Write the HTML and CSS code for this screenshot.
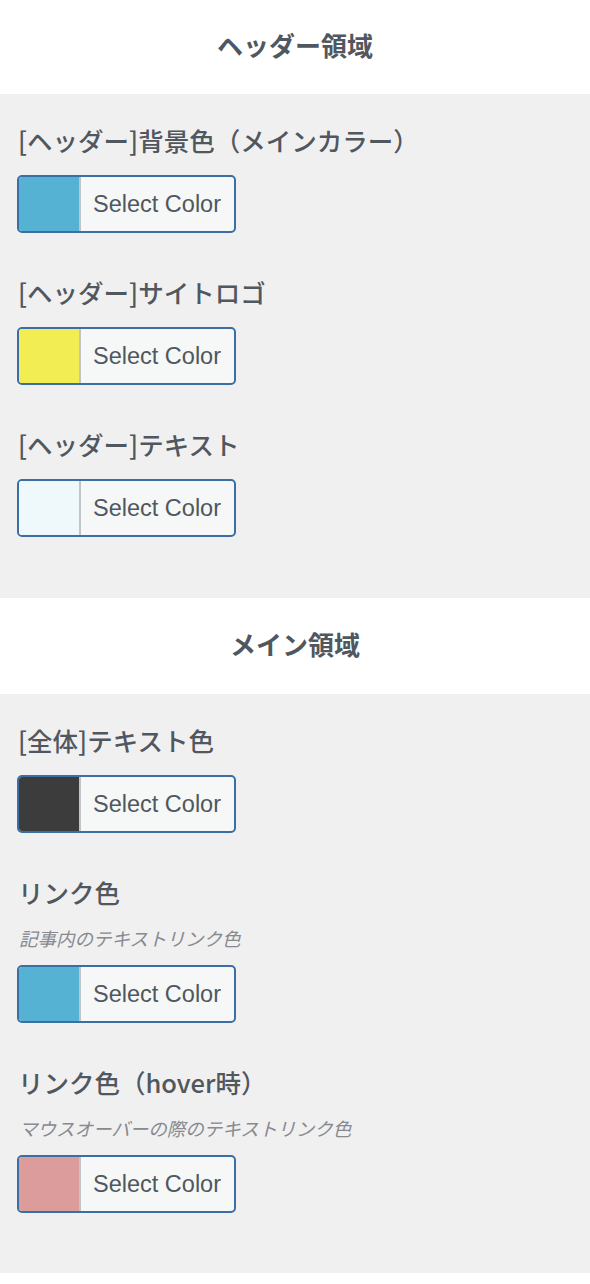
FILE: index.html
```html
<!DOCTYPE html>
<html lang="ja">
<head>
<meta charset="utf-8">
<link rel="stylesheet" href="styles.css">
</head>
<body>
<div class="band"><h3 class="band-title">ヘッダー領域</h3></div>
<section class="panel">
  <div class="control">
    <div class="label">[ヘッダー]背景色（メインカラー）</div>
    <button class="picker"><span class="swatch sw-blue"></span><span class="picker-text">Select Color</span></button>
  </div>
  <div class="control">
    <div class="label">[ヘッダー]サイトロゴ</div>
    <button class="picker"><span class="swatch sw-yellow"></span><span class="picker-text">Select Color</span></button>
  </div>
  <div class="control">
    <div class="label">[ヘッダー]テキスト</div>
    <button class="picker"><span class="swatch sw-white"></span><span class="picker-text">Select Color</span></button>
  </div>
</section>
<div class="band band-2"><h3 class="band-title">メイン領域</h3></div>
<section class="panel">
  <div class="control">
    <div class="label">[全体]テキスト色</div>
    <button class="picker"><span class="swatch sw-dark"></span><span class="picker-text">Select Color</span></button>
  </div>
  <div class="control">
    <div class="label has-desc">リンク色</div>
    <div class="desc">記事内のテキストリンク色</div>
    <button class="picker"><span class="swatch sw-blue"></span><span class="picker-text">Select Color</span></button>
  </div>
  <div class="control">
    <div class="label has-desc">リンク色（hover時）</div>
    <div class="desc">マウスオーバーの際のテキストリンク色</div>
    <button class="picker"><span class="swatch sw-pink"></span><span class="picker-text">Select Color</span></button>
  </div>
</section>
</body>
</html>
```

FILE: styles.css
```css
html, body {
  margin: 0;
  padding: 0;
  background: #ffffff;
}
body {
  font-family: "Liberation Sans", "Noto Sans CJK JP", sans-serif;
  color: #50575e;
  width: 590px;
}
.band {
  height: 94px;
  display: flex;
  align-items: center;
  justify-content: center;
}
.band-2 {
  height: 96px;
}
.band-title {
  margin: 0;
  font-size: 26px;
  font-weight: 700;
  line-height: 32px;
  color: #50575e;
}
.panel {
  background: #f0f0f1;
  padding: 32px 17px 60px;
  display: flex;
  flex-direction: column;
  gap: 45px;
}
.panel:first-of-type {
  padding-bottom: 61px;
}
.control {
  display: flex;
  flex-direction: column;
  align-items: flex-start;
}
.label {
  font-family: "Noto Sans CJK JP", "Liberation Sans", sans-serif;
  font-size: 25.5px;
  font-weight: 500;
  line-height: 32px;
  margin: -2px 0 19px 1px;
  white-space: nowrap;
}
.label.has-desc {
  margin-bottom: 18px;
}
.desc {
  font-size: 18.5px;
  font-style: italic;
  line-height: 28px;
  color: #878a8f;
  margin: 0 0 11px 2px;
}
.picker {
  display: flex;
  align-items: stretch;
  height: 58px;
  width: 219px;
  padding: 0;
  margin: 0;
  border: 2px solid #3b6ea5;
  border-radius: 5px;
  background: #f6f7f7;
  overflow: hidden;
  font-family: inherit;
  cursor: pointer;
}
.swatch {
  width: 60px;
  flex: none;
  border-right: 2px solid #c3c4c7;
}
.sw-blue { background: #55b2d3; }
.sw-yellow { background: #f1ed52; }
.sw-white { background: #eff8fa; }
.sw-dark { background: #3c3c3c; }
.sw-pink { background: #dc9c9c; }
.picker-text {
  display: flex;
  align-items: center;
  padding-left: 12px;
  font-size: 23.5px;
  color: #50575e;
  white-space: nowrap;
}
```
